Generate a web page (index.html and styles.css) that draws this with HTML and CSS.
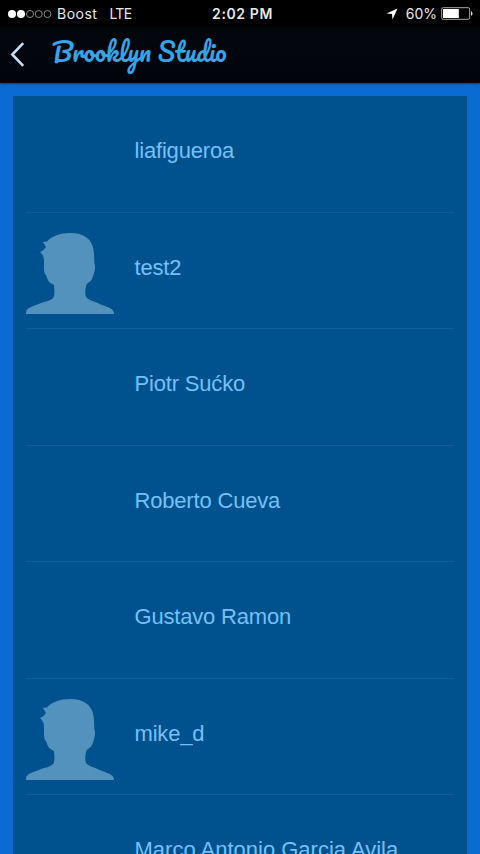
FILE: index.html
```html
<!DOCTYPE html>
<html lang="en">
<head>
<meta charset="utf-8">
<title>Brooklyn Studio</title>
<link rel="stylesheet" href="styles.css">
</head>
<body>
<svg class="defs" aria-hidden="true">
  <symbol id="person" viewBox="0 0 88 82">
    <path d="M0 82C0 77 2 76 10 73C19 69 27 69 28 64C29 60 28 56 28 53C24 51 22 50 20 43C17.500 42 18 34 18 29C18 25 17 23 14 20L17 18.500L20 15L17 10L21 9.500C26 4 34 1 44 1C58 1 66 7 67.500 18C68.500 24 68 28 68.500 32C70 36 68 42 66 47C64 51 61 50 60 54C59 58 59 62 60 65C62 68 68 69 76 73C84 76 88 77 88 82Z"/>
  </symbol>
</svg>
<div class="screen">
  <header class="header">
    <div class="status">
      <div class="carrier">
        <svg class="signal" viewBox="0 0 44 10"><g fill="#fff"><circle cx="4" cy="5" r="4"/><circle cx="13" cy="5" r="4"/></g><g fill="none" stroke="#aaa" stroke-width=".8"><circle cx="22" cy="5" r="3.500"/><circle cx="30.700" cy="5" r="3.500"/><circle cx="39.500" cy="5" r="3.500"/></g></svg>
        <span class="network">Boost</span><span class="lte">LTE</span>
      </div>
      <div class="time">2:02 PM</div>
      <div class="power">
        <svg class="location" viewBox="0 0 12 12"><path fill="#fff" d="M11.500.5L6.500 11.500L6 6L.5 5.500Z"/></svg>
        <span class="percent">60%</span>
        <svg class="battery" viewBox="0 0 32 13"><rect x=".7" y=".7" width="28" height="11.600" rx="1.500" fill="none" stroke="#aaa"/><rect x="2" y="2" width="15.800" height="9" fill="#fff"/><path d="M30 4Q33 6.500 30 9Z" fill="#ddd"/></svg>
      </div>
    </div>
    <div class="nav">
      <svg class="back" viewBox="0 0 14 24"><path d="M12.500 1L2 12L12.500 23" fill="none" stroke="#c4def5" stroke-width="2.500"/></svg>
      <h1 class="title">Brooklyn Studio</h1>
    </div>
  </header>
  <main class="list">
    <div class="row"><div class="avatar"></div><span class="name">liafigueroa</span></div>
    <div class="row"><svg class="avatar"><use href="#person"/></svg><span class="name">test2</span></div>
    <div class="row"><div class="avatar"></div><span class="name">Piotr Sućko</span></div>
    <div class="row"><div class="avatar"></div><span class="name">Roberto Cueva</span></div>
    <div class="row"><div class="avatar"></div><span class="name">Gustavo Ramon</span></div>
    <div class="row"><svg class="avatar"><use href="#person"/></svg><span class="name">mike_d</span></div>
    <div class="row"><div class="avatar"></div><span class="name wide">Marco Antonio Garcia Avila</span></div>
  </main>
</div>
</body>
</html>
```
FILE: styles.css
```css
* { box-sizing: border-box; }
body { margin: 0; background: #0a6bd0; font-family: "Liberation Sans", Arial, sans-serif; }
.defs { display: block; width: 0; height: 0; }
.screen { width: 480px; height: 854px; overflow: hidden; background: #0a6bd0; }
.header { height: 83px; background: linear-gradient(#000 0 26px, #03070b 27px, #02040d 82px); box-shadow: 0 1px 2px #023b78; }
.status { display: grid; grid-template-columns: 180px 1fr 180px; align-items: center; height: 27px; color: #e8e8e8; font-family: Inter, "Liberation Sans", sans-serif; font-size: 14px; line-height: 26px; }
.carrier { display: flex; align-items: center; padding-left: 8px; }
.signal { width: 44px; height: 10px; }
.network { margin-left: 5px; letter-spacing: .5px; }
.lte { margin-left: 12px; letter-spacing: -.7px; }
.time { text-align: center; font-weight: 600; letter-spacing: .6px; padding-left: 5px; white-space: nowrap; }
.power { display: flex; align-items: center; justify-content: flex-end; padding-right: 7px; }
.location { width: 12px; height: 12px; margin-right: 8px; }
.percent { margin-right: 4px; }
.battery { width: 32px; height: 13px; }
.nav { display: flex; align-items: center; height: 55px; padding-left: 10px; }
.back { width: 15px; height: 25px; flex: none; }
.title { margin: -7px 0 0 27px; color: #35a5e9; font: 400 25px/34px Pacifico, Lato, cursive; white-space: nowrap; }
.list { width: 454.500px; margin: 13px 0 0 12.500px; height: 780px; padding: 0 13px; background: #00528f; }
.row { display: flex; align-items: center; height: 116.500px; border-bottom: 1.500px solid #0e5d9c; }
.avatar { width: 88px; height: 82px; margin: 5px 20.500px 0 .5px; flex: none; fill: #5392bd; }
.name { margin-top: -5px; color: #75c0f9; font-size: 22px; line-height: 28px; letter-spacing: -.18px; white-space: nowrap; }
.name.wide { letter-spacing: 0; }
```
